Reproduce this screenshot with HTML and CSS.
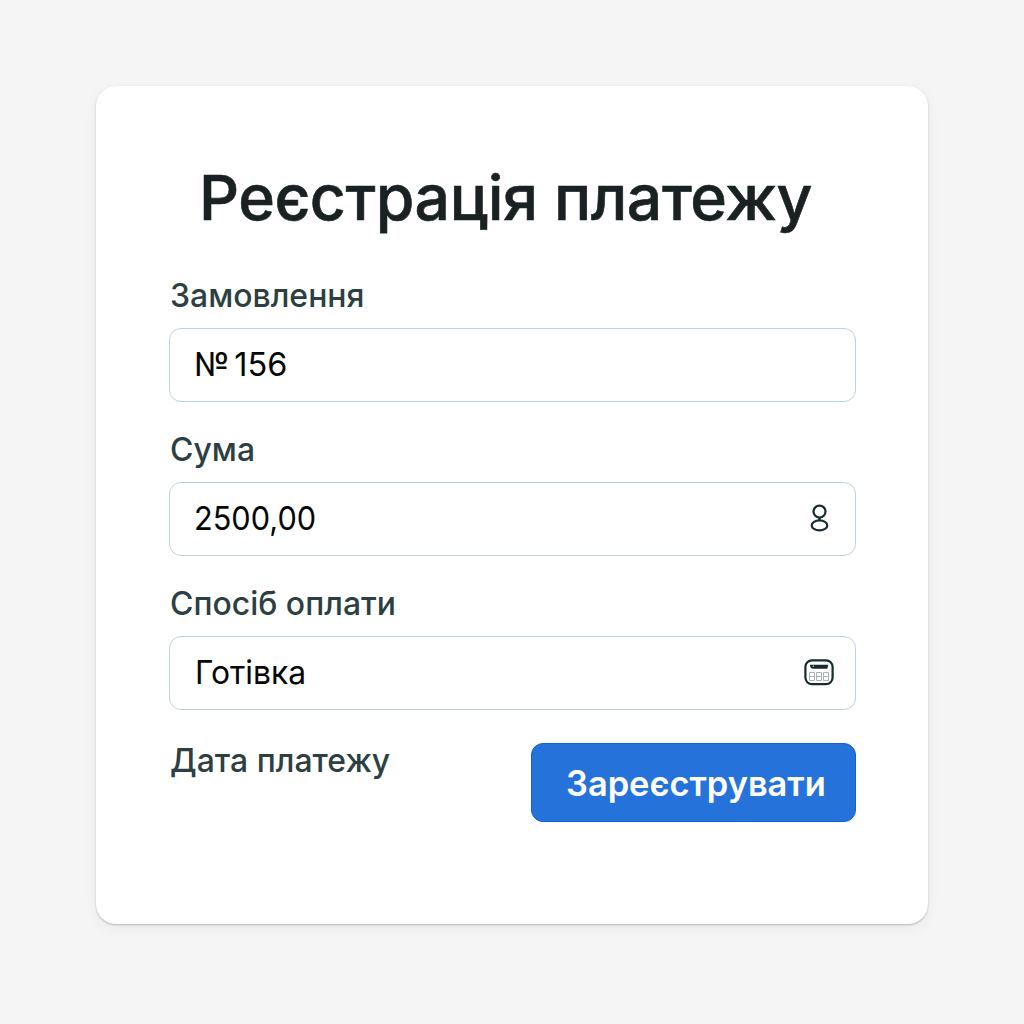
FILE: index.html
```html
<!DOCTYPE html>
<html lang="uk">
<head>
<meta charset="utf-8">
<title>Реєстрація платежу</title>
<link rel="stylesheet" href="styles.css">
</head>
<body>
<form class="card">
  <h1 class="title">Реєстрація платежу</h1>
  <div class="field">
    <div class="label"><span class="label-text">Замовлення</span></div>
    <div class="box"><span class="value order">№ 156</span></div>
  </div>
  <div class="field">
    <div class="label"><span class="label-text">Сума</span></div>
    <div class="box">
      <span class="value amount">2500,00</span>
      <svg width="30" height="30" viewBox="0 0 30 30" fill="none" stroke="#172b2f" stroke-width="2.200"><circle cx="15.500" cy="8.600" r="6"/><path d="M15.500 14.300v3"/><ellipse cx="15.500" cy="22.400" rx="7.800" ry="5"/></svg>
    </div>
  </div>
  <div class="field">
    <div class="label"><span class="label-text">Спосіб оплати</span></div>
    <div class="box">
      <span class="value method">Готівка</span>
      <svg width="30" height="30" viewBox="0 0 30 30" fill="none" stroke="#172b2f" stroke-width="2.200"><rect x="1.400" y="3.300" width="27.200" height="23.800" rx="6.500"/><path d="M6 7.700h18.300l-1 4h-14q-3.300 0-3.300-4z" fill="#172b2f" stroke="none"/><path d="M9.300 8.500v1.500" stroke="#fff" stroke-width=".8"/><path d="M5.500 15.500h5v8h-5zM12.500 15.500h5v8h-5zM19.500 15.500h5v8h-5zM5.500 19.500h5M12.500 19.500h5M19.500 19.500h5" stroke="#a9b3b5" stroke-width="1"/></svg>
    </div>
  </div>
  <div class="footer">
    <div class="label date-label"><span class="label-text">Дата платежу</span></div>
    <button class="submit" type="button"><span class="submit-text">Зареєструвати</span></button>
  </div>
</form>
</body>
</html>
```
FILE: styles.css
```css
* { box-sizing: border-box; }
body {
  margin: 0;
  height: 1024px;
  padding: 86px 96px;
  background: #f5f5f5;
  font-family: Inter, "Liberation Sans", sans-serif;
}
.card {
  width: 832px;
  height: 838px;
  padding: 67px 72px 0 73px;
  border-radius: 20px;
  background: #fff;
  box-shadow: 0 1px 2px rgba(0,0,0,.24), 0 4px 14px rgba(0,0,0,.05);
}
.title {
  margin: 0;
  height: 121px;
  padding-left: 30px;
  font-size: 62.500px;
  line-height: 89px;
  font-weight: 500;
  letter-spacing: -.45px;
  color: #1a2123;
  -webkit-text-stroke: .6px #1a2123;
  white-space: nowrap;
}
.field { height: 154px; }
.label {
  height: 54px;
  padding-left: 1px;
  line-height: 43px;
  font-size: 33px;
  font-weight: 500;
  color: #2d3f42;
}
.label-text, .value, .submit-text {
  display: inline-block;
  white-space: nowrap;
  transform-origin: left center;
}
.label-text { transform: scaleX(.968); }
.box {
  height: 74px;
  display: flex;
  align-items: center;
  justify-content: space-between;
  padding: 0 21px 2px 24px;
  border: 1px solid #bfd0e1;
  border-radius: 12px;
}
.value { font-size: 33px; color: #060707; }
.order { word-spacing: -4.500px; transform: scaleX(.985); }
.amount { transform: scaleX(.93); }
.method { transform: translateX(1px) scaleX(.965); }
.footer {
  display: flex;
  justify-content: space-between;
  padding-top: 7px;
}
.date-label { line-height: 34px; }
.submit {
  width: 325px;
  height: 79px;
  padding: 0 0 0 34px;
  border: 1px solid #1260d5;
  border-radius: 12px;
  background: #2672db;
  color: #fff;
  font: 600 35px Inter, sans-serif;
  text-align: left;
}
.submit-text { transform: scaleX(.983); }
```
